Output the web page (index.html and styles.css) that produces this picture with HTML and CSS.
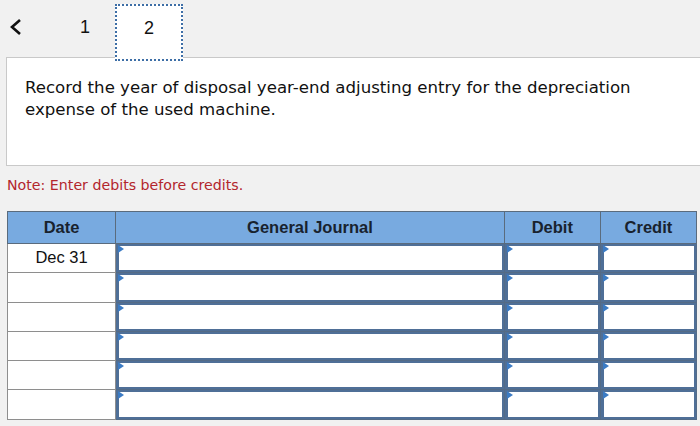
FILE: index.html
```html
<!DOCTYPE html>
<html lang="en">
<head>
    <meta charset="UTF-8">
    <meta name="viewport" content="width=device-width, initial-scale=1.0">
    <title>Journal Entry</title>
    <link rel="stylesheet" href="styles.css">
</head>
<body>

    <div class="topbar">
        <svg class="back" width="14" height="18" viewBox="0 0 14 18">
            <path d="M11 2 L3 9 L11 16" fill="none" stroke="#111" stroke-width="2.6"/>
        </svg>
        <span class="tab">1</span>
        <span class="tab active">2</span>
    </div>

    <div class="question">
        <p>Record the year of disposal year-end adjusting entry for the depreciation expense of the used machine.</p>
    </div>

    <p class="note">Note: Enter debits before credits.</p>

    <table class="journal">
        <thead>
            <tr>
                <th class="col-date">Date</th>
                <th class="col-desc">General Journal</th>
                <th class="col-num">Debit</th>
                <th class="col-num">Credit</th>
            </tr>
        </thead>
        <tbody>
            <tr>
                <td class="date">Dec 31</td>
                <td><div class="field"><input type="text"></div></td>
                <td><div class="field"><input type="text"></div></td>
                <td><div class="field"><input type="text"></div></td>
            </tr>
            <tr>
                <td class="date"></td>
                <td><div class="field"><input type="text"></div></td>
                <td><div class="field"><input type="text"></div></td>
                <td><div class="field"><input type="text"></div></td>
            </tr>
            <tr>
                <td class="date"></td>
                <td><div class="field"><input type="text"></div></td>
                <td><div class="field"><input type="text"></div></td>
                <td><div class="field"><input type="text"></div></td>
            </tr>
            <tr>
                <td class="date"></td>
                <td><div class="field"><input type="text"></div></td>
                <td><div class="field"><input type="text"></div></td>
                <td><div class="field"><input type="text"></div></td>
            </tr>
            <tr>
                <td class="date"></td>
                <td><div class="field"><input type="text"></div></td>
                <td><div class="field"><input type="text"></div></td>
                <td><div class="field"><input type="text"></div></td>
            </tr>
            <tr>
                <td class="date"></td>
                <td><div class="field"><input type="text"></div></td>
                <td><div class="field"><input type="text"></div></td>
                <td><div class="field"><input type="text"></div></td>
            </tr>
        </tbody>
    </table>

</body>
</html>
```

FILE: styles.css
```css
* {
    margin: 0;
    padding: 0;
    box-sizing: border-box;
}

body {
    width: 700px;
    background: #f1f1f1;
    font-family: 'Liberation Sans', Arial, sans-serif;
    overflow: hidden;
}

.topbar {
    display: flex;
    align-items: flex-start;
    height: 57px;
    padding-left: 9px;
}

.back {
    margin-top: 18px;
}

.tab {
    width: 68px;
    height: 56px;
    margin-top: 4px;
    font-size: 18px;
    color: #111;
    text-align: center;
    line-height: 46px;
}

.tab:first-of-type {
    width: 50px;
    margin-left: 37px;
}

.tab.active {
    position: relative;
    z-index: 1;
    height: 57px;
    margin-left: 5px;
    background: #fff;
    border: 2px dotted #3d6ea6;
    line-height: 44px;
}

.question {
    height: 109px;
    margin-left: 6px;
    padding: 19px 18px;
    background: #fff;
    border: 1px solid #c9c9c9;
    border-right: none;
}

.question p {
    font-family: 'DejaVu Sans', Verdana, sans-serif;
    font-size: 16.6px;
    line-height: 22px;
    color: #111;
    width: 630px;
}

.note {
    margin: 11px 0 0 7px;
    font-family: 'DejaVu Sans', Verdana, sans-serif;
    font-size: 14.2px;
    color: #b3262d;
}

.journal {
    margin: 18px 0 0 7px;
    width: 690px;
    border-collapse: collapse;
    background: #fff;
}

.journal th {
    height: 32px;
    background: #78aae0;
    color: #18222e;
    font-size: 16.5px;
    font-weight: bold;
    border: 1px solid #5a6b7d;
}

.col-date {
    width: 108px;
}

.col-desc {
    width: 388px;
}

.col-num {
    width: 96px;
}

.journal td {
    height: 29.3px;
    padding: 0;
    border: 1px solid #8e8e8e;
}

.journal td.date {
    text-align: center;
    font-size: 16.5px;
    color: #111;
    padding-bottom: 2px;
}

.journal td:not(.date) {
    border-color: #546b86;
}

.field {
    position: relative;
    height: 28.3px;
}

.field::before {
    content: "";
    position: absolute;
    left: 2px;
    top: 1px;
    border-top: 4px solid transparent;
    border-bottom: 4px solid transparent;
    border-left: 6px solid #3b7bc4;
}

.field input {
    display: block;
    width: 100%;
    height: 100%;
    border: 2px solid #4f6f97;
    border-left-width: 3px;
    background: #fff;
    outline: none;
}
```
